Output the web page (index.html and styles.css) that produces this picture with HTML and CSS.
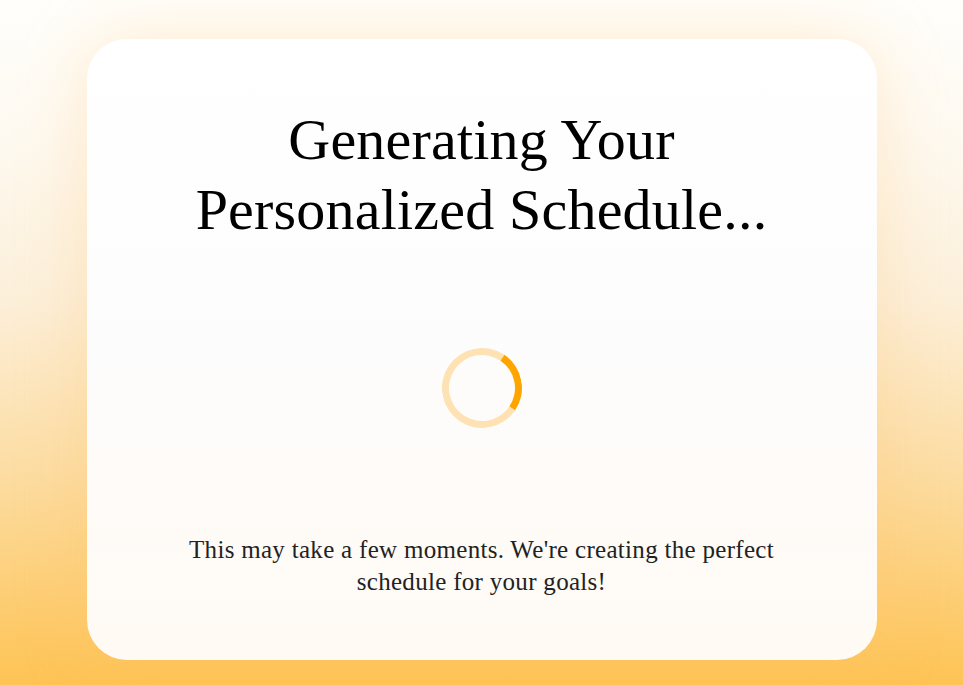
FILE: index.html
```html
<!DOCTYPE html>
<html lang="en">
<head>
<meta charset="utf-8">
<title>Generating Your Personalized Schedule</title>
<link rel="stylesheet" href="styles.css">
</head>
<body>
<main class="page">
  <section class="card">
    <h1 class="title">Generating Your<br>Personalized Schedule...</h1>
    <div class="spinner" aria-label="Loading"></div>
    <p class="note">This may take a few moments. We're creating the perfect<br>schedule for your goals!</p>
  </section>
</main>
</body>
</html>
```

FILE: styles.css
```css
html, body {
  margin: 0;
  padding: 0;
}
body {
  width: 963px;
  height: 685px;
  overflow: hidden;
  background: linear-gradient(180deg, #fffefb 0%, #fefaf2 18%, #fcefd9 44%, #fcdca0 70%, #fec354 100%);
  font-family: "Liberation Serif", "Times New Roman", serif;
}
.page {
  display: flex;
  justify-content: center;
  padding-top: 39px;
}
.card {
  box-sizing: border-box;
  width: 790px;
  height: 621px;
  border-radius: 40px;
  background: linear-gradient(180deg, #ffffff 0%, #fdfdfe 40%, #fffaf4 100%);
  box-shadow: 0 0 70px rgba(255, 190, 100, 0.28);
  display: flex;
  flex-direction: column;
  align-items: center;
  padding-top: 66px;
}
.title {
  margin: 0;
  font-weight: 400;
  font-size: 58px;
  letter-spacing: 0.2px;
  line-height: 70px;
  color: #000;
  text-align: center;
}
.spinner {
  box-sizing: border-box;
  width: 80px;
  height: 80px;
  margin-top: 103px;
  border-radius: 50%;
  border: 7px solid #ffe2b3;
  border-right-color: #ffa500;
  transform: rotate(-11deg);
}
.note {
  margin: 106px 0 0;
  font-size: 25px;
  letter-spacing: 0.3px;
  line-height: 32px;
  color: #222;
  text-align: center;
}
```
